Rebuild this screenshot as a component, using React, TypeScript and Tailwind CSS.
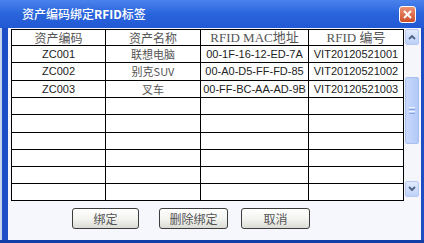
import React from "react";

const rows = [
  { code: "ZC001", name: "联想电脑", mac: "00-1F-16-12-ED-7A", rfid: "VIT20120521001" },
  { code: "ZC002", name: "别克SUV", mac: "00-A0-D5-FF-FD-85", rfid: "VIT20120521002" },
  { code: "ZC003", name: "叉车", mac: "00-FF-BC-AA-AD-9B", rfid: "VIT20120521003" },
  null,
  null,
  null,
  null,
  null,
  null,
];

const rowHeights = ["h-[17px]", "h-[18px]", "h-[17px]", "h-[17px]", "h-[18px]", "h-[17px]", "h-[17px]", "h-[17px]", "h-[17px]"];

const cjk = { fontFamily: '"Noto Sans CJK SC", "Noto Sans", sans-serif' };
const latin = { fontFamily: '"Liberation Sans", "Noto Sans CJK SC", sans-serif' };
const serif = { fontFamily: '"Liberation Serif", "Noto Sans CJK SC", serif' };

function Btn({ label, className }: { label: string; className: string }) {
  return (
    <button
      className={`h-[21px] rounded-[3px] border border-[#3c3c3c] bg-gradient-to-b from-[#ffffff] via-[#f4f4f1] to-[#dcdcd6] text-[12px] leading-none text-[#555] ${className}`}
      style={cjk}
    >
      {label}
    </button>
  );
}

function ScrollBar() {
  return (
    <div className="flex h-[168px] w-[16px] shrink-0 flex-col bg-[#f4f6fc] pl-[1px]">
      <div className="flex h-[16px] w-[14px] shrink-0 items-center justify-center rounded-[2px] border border-[#b7c9f2] bg-gradient-to-b from-[#e3ebfd] to-[#bcd0f8]">
        <svg width="8" height="6" viewBox="0 0 8 6">
          <path d="M1 5 L4 2 L7 5" stroke="#4d6185" strokeWidth="1.8" fill="none" />
        </svg>
      </div>
      <div className="h-[32px] shrink-0" />
      <div className="flex h-[67px] w-[14px] shrink-0 items-center justify-center rounded-[2px] border border-[#a9bff0] bg-gradient-to-r from-[#c9d9fd] to-[#b3c9f7]">
        <div className="flex flex-col gap-[1px]">
          <div className="h-[1px] w-[6px] bg-[#eef3ff]" />
          <div className="h-[1px] w-[6px] bg-[#8ba6e0]" />
          <div className="h-[1px] w-[6px] bg-[#eef3ff]" />
          <div className="h-[1px] w-[6px] bg-[#8ba6e0]" />
        </div>
      </div>
      <div className="flex-1" />
      <div className="flex h-[16px] w-[14px] shrink-0 items-center justify-center rounded-[2px] border border-[#b7c9f2] bg-gradient-to-b from-[#e3ebfd] to-[#bcd0f8]">
        <svg width="8" height="6" viewBox="0 0 8 6">
          <path d="M1 1 L4 4 L7 1" stroke="#4d6185" strokeWidth="1.8" fill="none" />
        </svg>
      </div>
    </div>
  );
}

export default function App() {
  return (
    <div className="flex h-[243px] w-[424px] flex-col bg-[#1c4fc6]">
      <div className="flex h-[28px] items-center justify-between bg-gradient-to-b from-[#4a82ec] via-[#2a64dc] to-[#2159d4] pl-[22px] pr-[8px]">
        <span className="text-[12px] font-medium leading-none text-white" style={cjk}>
          资产编码绑定<span className="font-bold">RFID</span>标签
        </span>
        <div className="flex h-[17px] w-[17px] items-center justify-center rounded-[3px] border border-white bg-gradient-to-b from-[#ec9274] to-[#cc4c26]">
          <svg width="9" height="9" viewBox="0 0 9 9">
            <path d="M1 1 L8 8 M8 1 L1 8" stroke="white" strokeWidth="2" />
          </svg>
        </div>
      </div>
      <div className="flex flex-1">
        <div className="w-[2px] bg-[#c8d3f0]" />
        <div className="w-[6px] bg-[#1d4ec6]" />
        <div className="flex flex-1 flex-col bg-[#f5f7fd] pl-[3px] pt-[1px]">
          <div className="flex items-start">
            <div className="w-[393px] border-l border-t border-black bg-white">
              <div className="flex h-[16px] border-b border-black text-[12px] leading-none text-[#555]">
                <div className="flex w-[94px] items-center justify-center border-r border-black" style={cjk}>资产编码</div>
                <div className="flex w-[95px] items-center justify-center border-r border-black" style={cjk}>资产名称</div>
                <div className="flex w-[108px] items-center justify-center border-r border-black text-[13px]" style={serif}>RFID MAC地址</div>
                <div className="flex w-[95px] items-center justify-center border-r border-black text-[13px]" style={serif}>RFID 编号</div>
              </div>
              {rows.map((r, i) => (
                <div key={i} className={`flex border-b border-black text-[11px] leading-none ${rowHeights[i]}`}>
                  <div className="flex w-[94px] items-center justify-center border-r border-black text-[#222]" style={latin}>{r?.code}</div>
                  <div className="flex w-[95px] items-center justify-center border-r border-black text-[#555]" style={cjk}>{r?.name}</div>
                  <div className="flex w-[108px] items-center justify-center border-r border-black text-[#222]" style={latin}>{r?.mac}</div>
                  <div className="flex w-[95px] items-center justify-center border-r border-black text-[#222]" style={latin}>{r?.rfid}</div>
                </div>
              ))}
            </div>
            <ScrollBar />
          </div>
          <div className="mt-[7px] flex">
            <Btn label="绑定" className="ml-[61px] w-[67px]" />
            <Btn label="删除绑定" className="ml-[20px] w-[69px]" />
            <Btn label="取消" className="ml-[13px] w-[69px]" />
          </div>
        </div>
        <div className="w-[3px] bg-[#1d4ec6]" />
      </div>
      <div className="h-[3px] bg-[#123ea8]" />
    </div>
  );
}
